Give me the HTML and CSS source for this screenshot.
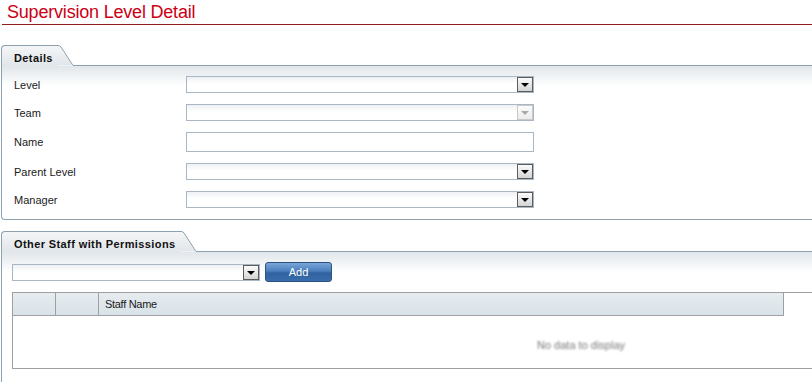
FILE: index.html
```html
<!DOCTYPE html>
<html>
<head>
    <title>Supervision Level Detail</title>
    <link rel="stylesheet" href="styles.css">
</head>
<body>
    <div class="page-title">
        <h1>Supervision Level Detail</h1>
    </div>

    <div class="panel">
        <div class="tab-row">
            <div class="tab">Details</div>
            <svg class="tab-slant" width="16" height="21" viewBox="0 0 16 21">
                <defs>
                    <linearGradient id="tabFill1" x1="0" y1="0" x2="0" y2="1">
                        <stop offset="0" stop-color="#f4f5f6"/>
                        <stop offset="1" stop-color="#e1e6ea"/>
                    </linearGradient>
                </defs>
                <path d="M0 0.5 Q2 0.5 3 2 L15 20.5 L0 20.5 Z" fill="url(#tabFill1)"/>
                <path d="M0 0.5 Q2 0.5 3 2 L15 20.5 L16 20.5" fill="none" stroke="#8ca0b0" stroke-width="1"/>
            </svg>
            <div class="tab-line"></div>
        </div>
        <div class="panel-body details">
            <div class="field">
                <label>Level</label>
                <div class="combo"><span class="combo-btn"><span class="arrow"></span></span></div>
            </div>
            <div class="field">
                <label>Team</label>
                <div class="combo disabled"><span class="combo-btn"><span class="arrow"></span></span></div>
            </div>
            <div class="field">
                <label>Name</label>
                <input type="text" class="text-input">
            </div>
            <div class="field">
                <label>Parent Level</label>
                <div class="combo"><span class="combo-btn"><span class="arrow"></span></span></div>
            </div>
            <div class="field">
                <label>Manager</label>
                <div class="combo"><span class="combo-btn"><span class="arrow"></span></span></div>
            </div>
        </div>
    </div>

    <div class="panel staff-panel">
        <div class="tab-row">
            <div class="tab">Other Staff with Permissions</div>
            <svg class="tab-slant" width="16" height="21" viewBox="0 0 16 21">
                <defs>
                    <linearGradient id="tabFill2" x1="0" y1="0" x2="0" y2="1">
                        <stop offset="0" stop-color="#f4f5f6"/>
                        <stop offset="1" stop-color="#e1e6ea"/>
                    </linearGradient>
                </defs>
                <path d="M0 0.5 Q2 0.5 3 2 L15 20.5 L0 20.5 Z" fill="url(#tabFill2)"/>
                <path d="M0 0.5 Q2 0.5 3 2 L15 20.5 L16 20.5" fill="none" stroke="#8ca0b0" stroke-width="1"/>
            </svg>
            <div class="tab-line"></div>
        </div>
        <div class="panel-body staff">
            <div class="add-row">
                <div class="combo staff-combo"><span class="combo-btn"><span class="arrow"></span></span></div>
                <button type="button" class="add-btn">Add</button>
            </div>
            <div class="grid">
                <div class="grid-head">
                    <div class="col col-a"></div>
                    <div class="col col-b"></div>
                    <div class="col col-name">Staff Name</div>
                </div>
                <div class="grid-body">
                    <span class="empty">No data to display</span>
                </div>
            </div>
        </div>
    </div>
</body>
</html>
```

FILE: styles.css
```css
html, body {
    overflow: hidden;
}
body {
    font-family: "Liberation Sans", Arial, sans-serif;
    font-size: 11px;
    color: #1a1a1a;
    margin: 0;
    padding: 0;
    background-color: #fff;
}
.page-title {
    margin: 0 0 20px 2px;
    border-bottom: 1px solid #8e1d1d;
}
.page-title h1 {
    margin: 0;
    padding-left: 5px;
    height: 24px;
    line-height: 24px;
    font-size: 18px;
    font-weight: normal;
    letter-spacing: -0.2px;
    color: #cc0014;
}
.panel {
    margin-left: 1px;
}
.staff-panel {
    margin-top: 11px;
}
.tab-row {
    display: flex;
    height: 21px;
}
.tab {
    box-sizing: border-box;
    height: 21px;
    padding: 6px 5px 0 12px;
    border-top: 1px solid #8ca0b0;
    border-left: 1px solid #8ca0b0;
    border-top-left-radius: 4px;
    background: linear-gradient(#f4f5f6, #e1e6ea);
    font-weight: bold;
    letter-spacing: 0.4px;
    color: #111;
}
.tab-slant {
    display: block;
    flex: none;
}
.tab-line {
    flex: 1;
    border-bottom: 1px solid #8ca0b0;
}
.panel-body {
    border-left: 1px solid #8ca0b0;
    background: linear-gradient(#e1e6ea, #fff 20px);
}
.details {
    padding: 5px 0 5px 12px;
    border-bottom: 1px solid #8ca0b0;
    border-bottom-left-radius: 4px;
}
.field {
    display: flex;
    align-items: center;
    padding: 5px 0 6px;
}
.field label {
    width: 172px;
}
.combo {
    box-sizing: border-box;
    width: 348px;
    height: 17px;
    border: 1px solid #a8b7c3;
    background: linear-gradient(#eef1f4, #fff 7px);
    display: flex;
    justify-content: flex-end;
    align-items: flex-start;
}
.combo-btn {
    box-sizing: border-box;
    width: 16px;
    height: 15px;
    border: 1px solid #5c5c5c;
    background: linear-gradient(#fbfbfb, #d4d4d4);
    display: flex;
    justify-content: center;
    align-items: center;
}
.arrow {
    width: 0;
    height: 0;
    margin-top: 1px;
    border-left: 4px solid transparent;
    border-right: 4px solid transparent;
    border-top: 4px solid #000;
}
.combo.disabled .combo-btn {
    border-color: #c9c9c9;
    background: linear-gradient(#fcfcfc, #ececec);
}
.combo.disabled .arrow {
    border-top-color: #a9a9a9;
}
.text-input {
    box-sizing: border-box;
    width: 348px;
    height: 20px;
    margin: 0;
    border: 1px solid #a8b7c3;
    background: #fff;
}
.staff {
    padding: 10px 0 20px 10px;
}
.add-row {
    display: flex;
    align-items: center;
    gap: 5px;
}
.staff-combo {
    width: 248px;
}
.add-btn {
    box-sizing: border-box;
    width: 67px;
    height: 20px;
    padding: 0;
    border: 1px solid #2d5180;
    border-radius: 3px;
    background: linear-gradient(#7aa6d8, #4b7fbd 45%, #2f629f 55%, #3a6dab);
    color: #fff;
    font-family: "Liberation Sans", Arial, sans-serif;
    font-size: 11px;
    cursor: pointer;
}
.grid {
    margin-top: 10px;
    border: 1px solid #a0a0a0;
    border-right: none;
}
.grid-head {
    display: flex;
    box-sizing: border-box;
    width: 771px;
    height: 23px;
    border-right: 1px solid #a0a0a0;
    border-bottom: 1px solid #a0a0a0;
    background: linear-gradient(#e6ecf0, #d9e2e8);
}
.col {
    box-sizing: border-box;
    line-height: 22px;
}
.col-a {
    width: 43px;
    border-right: 1px solid #a0a0a0;
}
.col-b {
    width: 43px;
    border-right: 1px solid #a0a0a0;
}
.col-name {
    flex: 1;
    padding-left: 6px;
    letter-spacing: -0.3px;
}
.grid-body {
    height: 52px;
    box-sizing: border-box;
    padding: 23px 0 0 524px;
}
.empty {
    color: #777;
    filter: blur(1px);
}
```
